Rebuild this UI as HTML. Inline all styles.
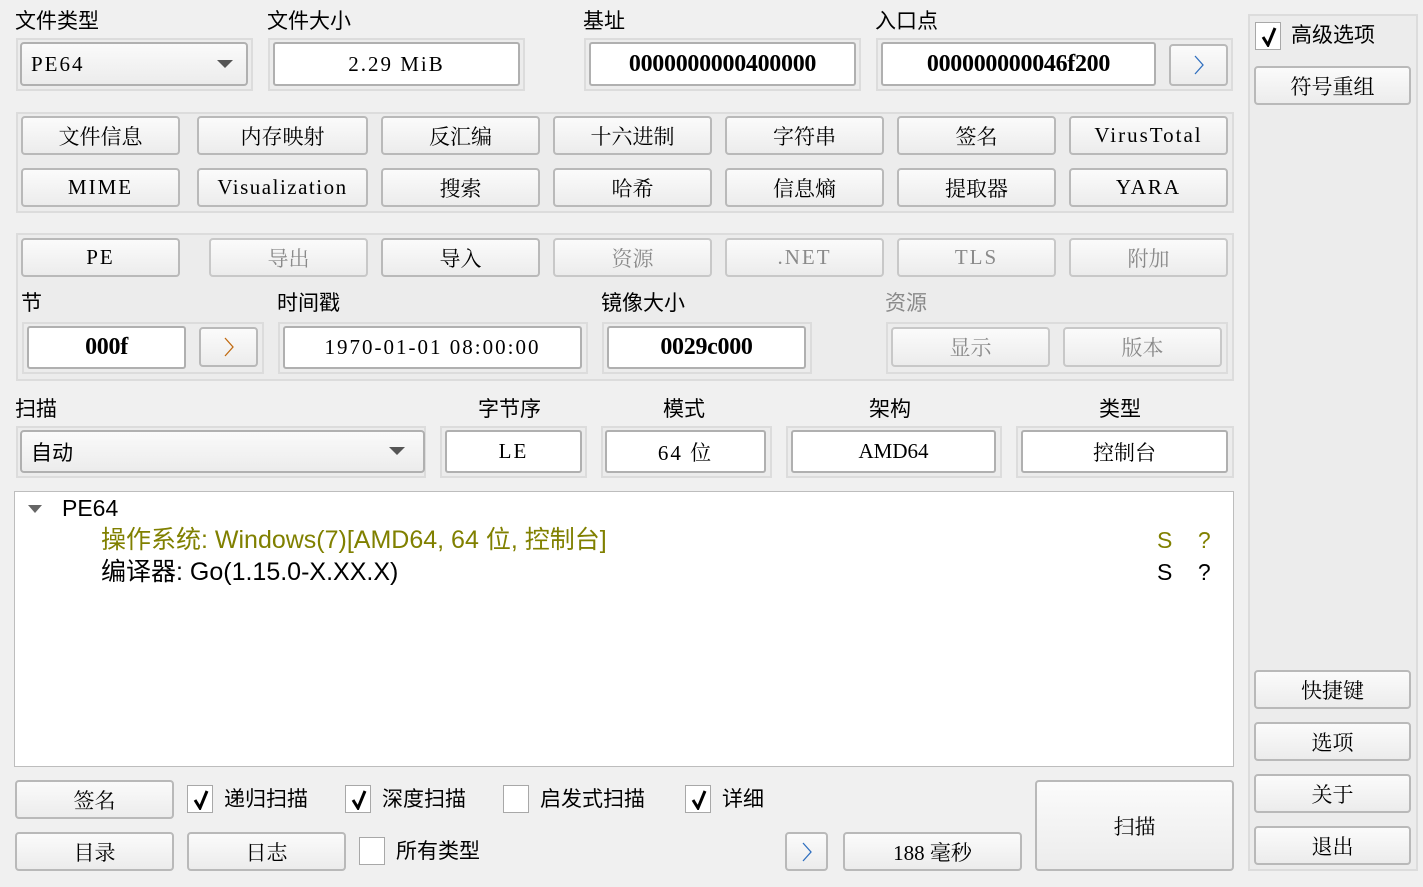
<!DOCTYPE html>
<html><head><meta charset="utf-8"><style>
*{box-sizing:border-box;margin:0;padding:0}
body{width:1423px;height:887px;background:#f0f0f0;position:relative;overflow:hidden;font-family:"Liberation Serif","Noto Serif CJK SC",serif;font-size:21px;color:#000}
.a{position:absolute}
.lbl{position:absolute;font-family:"Liberation Sans","Noto Sans CJK SC",sans-serif;font-size:21px;line-height:28px;white-space:nowrap}
.frm{position:absolute;border:2px solid #dcdcdc;background:#ececec}
.btn{position:absolute;border:2px solid #b9b9b9;border-radius:4px;background:linear-gradient(#fbfbfb,#ececec);display:flex;align-items:center;justify-content:center;white-space:nowrap}
.dis{color:#8a8a8a;border-color:#c8c8c8}
.fld{position:absolute;border:2px solid #b0b0b0;border-radius:3px;background:#fff;display:flex;align-items:center;justify-content:center;white-space:nowrap}
.b{font-weight:bold;font-family:"Liberation Serif",serif;font-size:24px;letter-spacing:-0.3px}
.L{letter-spacing:2px}
.cb{position:absolute;width:26px;height:28px;border:1px solid #a8a8a8;background:#fff}
.cb svg{position:absolute;left:5px;top:4px}
.combo{position:absolute;border:2px solid #b0b0b0;border-radius:4px;background:linear-gradient(#fafafa,#ececec);display:flex;align-items:center;padding-left:9px}
.tri{position:absolute;width:0;height:0;border-left:8px solid transparent;border-right:8px solid transparent;border-top:8px solid #555}
</style></head><body>

<div class="lbl" style="left:15px;top:8px">文件类型</div>
<div class="lbl" style="left:267px;top:8px">文件大小</div>
<div class="lbl" style="left:583px;top:8px">基址</div>
<div class="lbl" style="left:875px;top:8px">入口点</div>

<div class="frm" style="left:16px;top:38px;width:237px;height:53px"></div>
<div class="combo L" style="left:20px;top:42px;width:228px;height:44px">PE64</div>
<div class="tri" style="left:217px;top:60px"></div>
<div class="frm" style="left:268px;top:38px;width:257px;height:53px"></div>
<div class="fld L" style="left:273px;top:42px;width:247px;height:44px">2.29 MiB</div>
<div class="frm" style="left:584px;top:38px;width:277px;height:53px"></div>
<div class="fld b" style="left:589px;top:42px;width:267px;height:44px">0000000000400000</div>
<div class="frm" style="left:876px;top:38px;width:357px;height:53px"></div>
<div class="fld b" style="left:881px;top:42px;width:275px;height:44px">000000000046f200</div>
<div class="btn" style="left:1169px;top:44px;width:59px;height:42px"><svg width="12" height="22"><polyline points="2,2 10,11 2,20" fill="none" stroke="#2f6fbf" stroke-width="1.3"/></svg></div>

<div class="frm" style="left:16px;top:112px;width:1218px;height:101px"></div>
<div class="btn" style="left:21px;top:116px;width:159px;height:39px">文件信息</div>
<div class="btn" style="left:197px;top:116px;width:171px;height:39px">内存映射</div>
<div class="btn" style="left:381px;top:116px;width:159px;height:39px">反汇编</div>
<div class="btn" style="left:553px;top:116px;width:159px;height:39px">十六进制</div>
<div class="btn" style="left:725px;top:116px;width:159px;height:39px">字符串</div>
<div class="btn" style="left:897px;top:116px;width:159px;height:39px">签名</div>
<div class="btn L" style="left:1069px;top:116px;width:159px;height:39px">VirusTotal</div>
<div class="btn L" style="left:21px;top:168px;width:159px;height:39px">MIME</div>
<div class="btn L" style="left:197px;top:168px;width:171px;height:39px;letter-spacing:1.5px">Visualization</div>
<div class="btn" style="left:381px;top:168px;width:159px;height:39px">搜索</div>
<div class="btn" style="left:553px;top:168px;width:159px;height:39px">哈希</div>
<div class="btn" style="left:725px;top:168px;width:159px;height:39px">信息熵</div>
<div class="btn" style="left:897px;top:168px;width:159px;height:39px">提取器</div>
<div class="btn L" style="left:1069px;top:168px;width:159px;height:39px">YARA</div>

<div class="frm" style="left:16px;top:233px;width:1218px;height:148px"></div>
<div class="btn L" style="left:21px;top:238px;width:159px;height:39px">PE</div>
<div class="btn dis" style="left:209px;top:238px;width:159px;height:39px">导出</div>
<div class="btn" style="left:381px;top:238px;width:159px;height:39px">导入</div>
<div class="btn dis" style="left:553px;top:238px;width:159px;height:39px">资源</div>
<div class="btn dis L" style="left:725px;top:238px;width:159px;height:39px">.NET</div>
<div class="btn dis L" style="left:897px;top:238px;width:159px;height:39px">TLS</div>
<div class="btn dis" style="left:1069px;top:238px;width:159px;height:39px">附加</div>
<div class="lbl" style="left:21px;top:290px">节</div>
<div class="lbl" style="left:277px;top:290px">时间戳</div>
<div class="lbl" style="left:601px;top:290px">镜像大小</div>
<div class="lbl" style="left:885px;top:290px;color:#8a8a8a">资源</div>
<div class="frm" style="left:22px;top:322px;width:242px;height:52px"></div>
<div class="fld b" style="left:27px;top:326px;width:159px;height:43px">000f</div>
<div class="btn" style="left:199px;top:327px;width:59px;height:40px"><svg width="12" height="22"><polyline points="2,2 10,11 2,20" fill="none" stroke="#c06a10" stroke-width="1.3"/></svg></div>
<div class="frm" style="left:278px;top:322px;width:310px;height:52px"></div>
<div class="fld L" style="left:283px;top:326px;width:299px;height:43px">1970-01-01 08:00:00</div>
<div class="frm" style="left:602px;top:322px;width:210px;height:52px"></div>
<div class="fld b" style="left:607px;top:326px;width:199px;height:43px">0029c000</div>
<div class="frm" style="left:886px;top:322px;width:342px;height:52px"></div>
<div class="btn dis" style="left:891px;top:327px;width:159px;height:40px">显示</div>
<div class="btn dis" style="left:1063px;top:327px;width:159px;height:40px">版本</div>

<div class="lbl" style="left:15px;top:396px">扫描</div>
<div class="lbl" style="left:478px;top:396px">字节序</div>
<div class="lbl" style="left:663px;top:396px">模式</div>
<div class="lbl" style="left:869px;top:396px">架构</div>
<div class="lbl" style="left:1099px;top:396px">类型</div>
<div class="frm" style="left:16px;top:426px;width:410px;height:52px"></div>
<div class="combo" style="left:20px;top:430px;width:405px;height:43px;font-family:'Liberation Sans','Noto Sans CJK SC',sans-serif">自动</div>
<div class="tri" style="left:389px;top:447px"></div>
<div class="frm" style="left:440px;top:426px;width:147px;height:52px"></div>
<div class="fld L" style="left:445px;top:430px;width:137px;height:43px">LE</div>
<div class="frm" style="left:601px;top:426px;width:171px;height:52px"></div>
<div class="fld L" style="left:605px;top:430px;width:161px;height:43px">64 位</div>
<div class="frm" style="left:786px;top:426px;width:216px;height:52px"></div>
<div class="fld" style="left:791px;top:430px;width:205px;height:43px">AMD64</div>
<div class="frm" style="left:1016px;top:426px;width:218px;height:52px"></div>
<div class="fld" style="left:1021px;top:430px;width:207px;height:43px">控制台</div>

<div class="a" style="left:14px;top:491px;width:1220px;height:276px;background:#fff;border:1px solid #bdbdbd"></div>
<div class="tri" style="left:28px;top:505px;border-top-color:#666;border-left-width:7px;border-right-width:7px"></div>
<div class="lbl" style="left:62px;top:494px;font-size:23px">PE64</div>
<div class="lbl" style="left:101px;top:526px;font-size:25px;color:#808000">操作系统: Windows(7)[AMD64, 64 位, 控制台]</div>
<div class="lbl" style="left:101px;top:558px;font-size:25px">编译器: Go(1.15.0-X.XX.X)</div>
<div class="lbl" style="left:1157px;top:526px;font-size:23px;color:#808000">S&nbsp;&nbsp;&nbsp;&nbsp;?</div>
<div class="lbl" style="left:1157px;top:558px;font-size:23px">S&nbsp;&nbsp;&nbsp;&nbsp;?</div>

<div class="btn" style="left:15px;top:780px;width:159px;height:39px">签名</div>
<div class="cb" style="left:187px;top:785px"><svg width="16" height="20"><polyline points="2,10 7,18 14,1" fill="none" stroke="#000" stroke-width="3"/></svg></div>
<div class="lbl" style="left:224px;top:786px">递归扫描</div>
<div class="cb" style="left:345px;top:785px"><svg width="16" height="20"><polyline points="2,10 7,18 14,1" fill="none" stroke="#000" stroke-width="3"/></svg></div>
<div class="lbl" style="left:382px;top:786px">深度扫描</div>
<div class="cb" style="left:503px;top:785px"></div>
<div class="lbl" style="left:540px;top:786px">启发式扫描</div>
<div class="cb" style="left:685px;top:785px"><svg width="16" height="20"><polyline points="2,10 7,18 14,1" fill="none" stroke="#000" stroke-width="3"/></svg></div>
<div class="lbl" style="left:722px;top:786px">详细</div>
<div class="btn" style="left:15px;top:832px;width:159px;height:39px">目录</div>
<div class="btn" style="left:187px;top:832px;width:159px;height:39px">日志</div>
<div class="cb" style="left:359px;top:837px"></div>
<div class="lbl" style="left:396px;top:838px">所有类型</div>
<div class="btn" style="left:785px;top:832px;width:43px;height:39px"><svg width="12" height="22"><polyline points="2,2 10,11 2,20" fill="none" stroke="#2f6fbf" stroke-width="1.3"/></svg></div>
<div class="btn" style="left:843px;top:832px;width:179px;height:39px">188 毫秒</div>
<div class="btn" style="left:1035px;top:780px;width:199px;height:91px">扫描</div>

<div class="a" style="left:1248px;top:14px;width:170px;height:857px;border:2px solid #dcdcdc;background:#ececec"></div>
<div class="cb" style="left:1255px;top:22px"><svg width="16" height="20"><polyline points="2,10 7,18 14,1" fill="none" stroke="#000" stroke-width="3"/></svg></div>
<div class="lbl" style="left:1291px;top:22px">高级选项</div>
<div class="btn" style="left:1254px;top:66px;width:157px;height:39px">符号重组</div>
<div class="btn" style="left:1254px;top:670px;width:157px;height:39px">快捷键</div>
<div class="btn" style="left:1254px;top:722px;width:157px;height:39px">选项</div>
<div class="btn" style="left:1254px;top:774px;width:157px;height:39px">关于</div>
<div class="btn" style="left:1254px;top:826px;width:157px;height:39px">退出</div>
</body></html>
